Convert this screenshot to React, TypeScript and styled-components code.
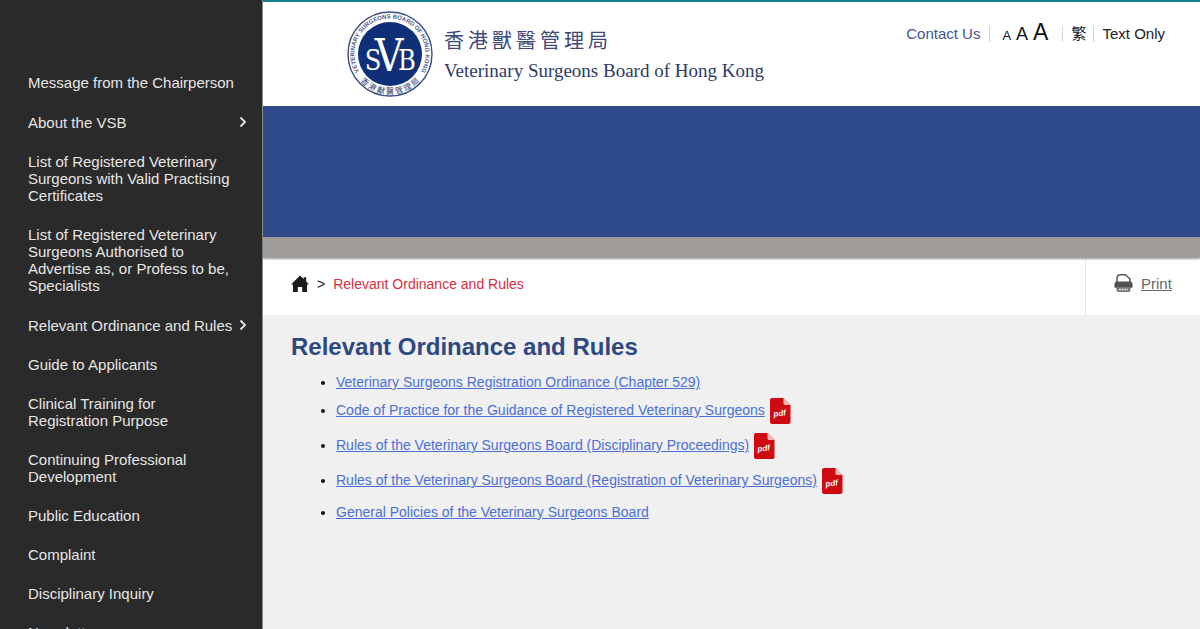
import React from "react";
import styled, { createGlobalStyle } from "styled-components";

const sans = `"Liberation Sans", Arial, "Noto Sans CJK TC", sans-serif`;

const GlobalStyle = createGlobalStyle`
  * { box-sizing: border-box; }
  html, body, #root { height: 100%; }
  body { margin: 0; font-family: ${sans}; background: #f0f0f0; color: #222; }
`;

const Page = styled.div`
  display: flex;
  height: 100vh;
  overflow: hidden;
`;

const Sidebar = styled.nav`
  flex: 0 0 263px;
  background: #2a2a2a;
  border-right: 1px solid #8c8c8c;
  padding: 74px 14px 0 28px;
  overflow: hidden;
`;

const Menu = styled.ul`
  list-style: none;
  margin: 0;
  padding: 0;
  display: flex;
  flex-direction: column;
  gap: 22px;
`;

const MenuLink = styled.a`
  display: flex;
  align-items: center;
  justify-content: space-between;
  color: #e6e6e6;
  font-size: 15px;
  line-height: 17px;
  text-decoration: none;
`;

const MenuLabel = styled.span`
  max-width: 208px;
`;

const Main = styled.div`
  flex: 1;
  min-width: 0;
  display: flex;
  flex-direction: column;
`;

const Header = styled.header`
  display: flex;
  justify-content: space-between;
  height: 106px;
  padding: 8px 35px 0 81px;
  border-top: 2px solid #16808f;
  background: #fff;
`;

const LogoLink = styled.a`
  display: block;
  line-height: 0;
`;

const Tools = styled.div`
  display: flex;
  align-items: center;
  height: 32px;
  margin-top: 8px;
`;

const ToolLink = styled.a<{ $color?: string }>`
  color: ${(p) => p.$color || "#222"};
  font-size: 15px;
  line-height: 20px;
  text-decoration: none;
`;

const Divider = styled.span<{ $before: number; $after: number }>`
  width: 1px;
  height: 16px;
  margin: 0 ${(p) => p.$after}px 0 ${(p) => p.$before}px;
  background: #d4d4d8;
`;

const Sizes = styled.div`
  display: flex;
  align-items: baseline;
  gap: 5px;
`;

const SizeButton = styled.button<{ $size: number }>`
  padding: 0;
  border: 0;
  background: none;
  color: #111;
  font-family: ${sans};
  font-size: ${(p) => p.$size}px;
  line-height: 24px;
`;

const Banner = styled.div`
  height: 131px;
  background: #2f4a8b;
`;

const Strip = styled.div`
  position: relative;
  height: 21px;
  background: #a09c9a;
  box-shadow: 0 1px 2px rgba(0, 0, 0, 0.4);
`;

const CrumbBar = styled.div`
  display: flex;
  justify-content: space-between;
  height: 57px;
  background: #fff;
`;

const Crumbs = styled.nav`
  display: flex;
  align-items: center;
  padding: 0 0 6px 28px;
  gap: 8px;
  font-size: 14px;
`;

const HomeLink = styled.a`
  display: flex;
  color: #1c1c1c;
`;

const Current = styled.span`
  color: #d5303e;
`;

const PrintBox = styled.div`
  flex: 0 0 115px;
  display: flex;
  align-items: center;
  padding: 0 0 7px 28px;
  border-left: 1px solid #e8e8e8;
`;

const PrintLink = styled.a`
  display: flex;
  align-items: center;
  gap: 8px;
  color: #666;
  font-size: 15px;
`;

const Content = styled.main`
  flex: 1;
  padding: 18px 28px;
  background: #f0f0f0;
`;

const Title = styled.h1`
  margin: 0;
  color: #2f4882;
  font-size: 24px;
  line-height: 28px;
`;

const Links = styled.ul`
  margin: 12px 0 0;
  padding: 0 0 0 45px;
  font-size: 14px;
  line-height: 18px;
  color: #111;
`;

const LinkRow = styled.li<{ $file: boolean }>`
  height: ${(p) => (p.$file ? 35 : 25)}px;
`;

const DocLink = styled.a`
  color: #4a6fd6;
`;

const PdfSvg = styled.svg`
  margin-left: 5px;
  vertical-align: middle;
`;

function Seal() {
  return (
    <g>
      <circle cx="46" cy="44" r="42" fill="#fff" stroke="#3b4d80" strokeWidth="1.4" />
      <circle cx="46" cy="44" r="32" fill="#0f2f78" />
      <path id="ringTop" d="M19 67 A35.5 35.5 0 1 1 73 67" fill="none" />
      <path id="ringBottom" d="M9 60 A40.3 40.3 0 0 0 83 60" fill="none" />
      <text fontFamily="Liberation Sans, sans-serif" fontSize="6" fontWeight="700" fill="#4a5a88">
        <textPath href="#ringTop" startOffset="50%" textAnchor="middle">
          VETERINARY SURGEONS BOARD OF HONG KONG
        </textPath>
      </text>
      <text fontFamily="Noto Sans CJK TC, sans-serif" fontSize="8" fill="#2c3f78">
        <textPath href="#ringBottom" startOffset="50%" textAnchor="middle">
          香 港 獸 醫 管 理 局
        </textPath>
      </text>
      <g fontFamily="DejaVu Serif Condensed, DejaVu Serif, serif" fill="#fff" textAnchor="middle">
        <text x="29" y="60" fontSize="27">S</text>
        <text x="45" y="61" fontSize="44">V</text>
        <text x="63" y="60" fontSize="27">B</text>
      </g>
    </g>
  );
}

function Logo() {
  return (
    <svg width="440" height="90" viewBox="0 0 440 90" role="img" aria-label="Veterinary Surgeons Board of Hong Kong">
      <Seal />
      <text
        x="100 124 148 172 196 220 244"
        y="38"
        fontFamily="Noto Sans CJK TC, sans-serif"
        fontSize="20"
        fill="#3d4a78"
      >
        香港獸醫管理局
      </text>
      <text x="100" y="67" fontFamily="Liberation Serif, serif" fontSize="19" fill="#2f3a66">
        Veterinary Surgeons Board of Hong Kong
      </text>
    </svg>
  );
}

function Chevron() {
  return (
    <svg width="10" height="18" viewBox="0 0 10 18" fill="none" stroke="#e6e6e6" strokeWidth="1.8" aria-hidden="true">
      <path d="M2.5 4.5 7 9 2.5 13.5" />
    </svg>
  );
}

function HomeIcon() {
  return (
    <svg width="18" height="18" viewBox="0 0 18 18" fill="currentColor" aria-hidden="true">
      <path d="M9 .5 12.6 4V2.2h2.6v4.3L18 9.5H16V17H11.2V12H6.8V17H2V9.5H0Z" />
    </svg>
  );
}

function PrinterIcon() {
  return (
    <svg width="19" height="20" viewBox="0 0 19 20" aria-hidden="true">
      <path d="M3 9.5V5.5Q3 1.8 6.5 1.8H11.5L16 6V9.5" fill="none" stroke="#555" strokeWidth="1.5" />
      <path d="M3 8.5H16Q18.5 8.5 18.5 11V14.8H.5V11Q.5 8.5 3 8.5Z" fill="#505050" />
      <path d="M2.5 14H16.5V17Q16.5 19 14.5 19H4.5Q2.5 19 2.5 17Z" fill="#777" />
      <path d="M5 16.5H14" stroke="#eee" strokeWidth="1.3" strokeDasharray="1.8 .8" />
    </svg>
  );
}

function PdfIcon() {
  return (
    <PdfSvg width="21" height="26" viewBox="0 0 21 26" role="img" aria-label="PDF">
      <path d="M2 0H13.5L20.5 7V24Q20.5 26 18.5 26H2Q0 26 0 24V2Q0 0 2 0Z" fill="#cf0a12" />
      <path d="M13.5 0 20.5 7H15Q13.5 7 13.5 5.5Z" fill="#f5b5b8" />
      <text
        x="10"
        y="18"
        transform="rotate(-8 10 18)"
        textAnchor="middle"
        fontFamily="Liberation Sans, sans-serif"
        fontSize="8"
        fontWeight="700"
        fontStyle="italic"
        fill="#fff"
      >
        pdf
      </text>
    </PdfSvg>
  );
}

const menu = [
  { label: "Message from the Chairperson" },
  { label: "About the VSB", sub: true },
  { label: "List of Registered Veterinary Surgeons with Valid Practising Certificates" },
  { label: "List of Registered Veterinary Surgeons Authorised to Advertise as, or Profess to be, Specialists" },
  { label: "Relevant Ordinance and Rules", sub: true },
  { label: "Guide to Applicants" },
  { label: "Clinical Training for Registration Purpose" },
  { label: "Continuing Professional Development" },
  { label: "Public Education" },
  { label: "Complaint" },
  { label: "Disciplinary Inquiry" },
  { label: "Newsletter" },
];

const documents = [
  { label: "Veterinary Surgeons Registration Ordinance (Chapter 529)", file: false },
  { label: "Code of Practice for the Guidance of Registered Veterinary Surgeons", file: true },
  { label: "Rules of the Veterinary Surgeons Board (Disciplinary Proceedings)", file: true },
  { label: "Rules of the Veterinary Surgeons Board (Registration of Veterinary Surgeons)", file: true },
  { label: "General Policies of the Veterinary Surgeons Board", file: false },
];

export default function App() {
  return (
    <Page>
      <GlobalStyle />
      <Sidebar>
        <Menu>
          {menu.map((item) => (
            <li key={item.label}>
              <MenuLink href="#">
                <MenuLabel>{item.label}</MenuLabel>
                {item.sub && <Chevron />}
              </MenuLink>
            </li>
          ))}
        </Menu>
      </Sidebar>
      <Main>
        <Header>
          <LogoLink href="#">
            <Logo />
          </LogoLink>
          <Tools>
            <ToolLink href="#" $color="#46558c">Contact Us</ToolLink>
            <Divider $before={9} $after={12} />
            <Sizes>
              <SizeButton $size={13}>A</SizeButton>
              <SizeButton $size={18}>A</SizeButton>
              <SizeButton $size={23}>A</SizeButton>
            </Sizes>
            <Divider $before={14} $after={8} />
            <ToolLink href="#" lang="zh-Hant">繁</ToolLink>
            <Divider $before={7} $after={8} />
            <ToolLink href="#">Text Only</ToolLink>
          </Tools>
        </Header>
        <Banner />
        <Strip />
        <CrumbBar>
          <Crumbs>
            <HomeLink href="#" aria-label="Home">
              <HomeIcon />
            </HomeLink>
            <span>&gt;</span>
            <Current>Relevant Ordinance and Rules</Current>
          </Crumbs>
          <PrintBox>
            <PrintLink href="#">
              <PrinterIcon />
              Print
            </PrintLink>
          </PrintBox>
        </CrumbBar>
        <Content>
          <Title>Relevant Ordinance and Rules</Title>
          <Links>
            {documents.map((doc) => (
              <LinkRow key={doc.label} $file={doc.file}>
                <DocLink href="#">{doc.label}</DocLink>
                {doc.file && <PdfIcon />}
              </LinkRow>
            ))}
          </Links>
        </Content>
      </Main>
    </Page>
  );
}
